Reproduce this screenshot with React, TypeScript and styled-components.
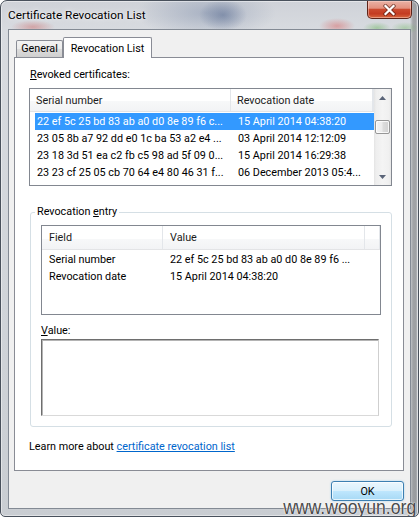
import React from 'react';
import styled, { createGlobalStyle } from 'styled-components';

const Global = createGlobalStyle`
  html, body { margin: 0; padding: 0; background: #ffffff; }
  body {
    font-family: Roboto, "Noto Sans", Arial, sans-serif;
    font-size: 10.8px;
    color: #000000;
  }
  * { box-sizing: border-box; }
`;

const Window = styled.div`
  position: relative;
  width: 419px;
  height: 517px;
  border: 1px solid #49515c;
  border-radius: 7px 7px 5px 5px;
  overflow: hidden;
  display: flex;
  flex-direction: column;
  box-shadow: inset 0 0 0 1px rgba(255, 255, 255, 0.45);
  background:
    radial-gradient(ellipse 22px 7px at 32px 26px, rgba(205, 120, 120, 0.55), transparent),
    radial-gradient(ellipse 24px 16px at 222px 14px, rgba(80, 100, 140, 0.5), transparent),
    radial-gradient(ellipse 70px 26px at 205px 12px, rgba(130, 145, 172, 0.5), transparent),
    radial-gradient(ellipse 18px 8px at 336px 25px, rgba(215, 120, 120, 0.6), transparent),
    radial-gradient(ellipse 14px 6px at 376px 27px, rgba(120, 185, 110, 0.55), transparent),
    radial-gradient(ellipse 14px 6px at 404px 27px, rgba(120, 185, 110, 0.45), transparent),
    linear-gradient(to right, transparent 409px, rgba(70, 70, 70, 0.35) 412px, rgba(40, 40, 40, 0.3) 415px, transparent 417px),
    linear-gradient(#cfd2d8, #d8dbe0 30px, #d0d4d9 300px, #c9cdd2);
`;

const TitleBar = styled.div`
  height: 28px;
  flex: none;
  display: flex;
  align-items: flex-start;
`;

const Title = styled.div`
  padding-left: 7px;
  line-height: 28px;
  font-size: 11.8px;
  color: #000;
  text-shadow: 0 0 6px rgba(255, 255, 255, 0.9), 0 0 2px rgba(255, 255, 255, 0.8);
`;

const CloseButton = styled.div`
  margin-left: auto;
  margin-right: 6px;
  width: 45px;
  height: 18px;
  border: 1px solid #5e2419;
  border-top: none;
  border-radius: 0 0 5px 5px;
  display: flex;
  align-items: center;
  justify-content: center;
  box-shadow: inset 0 0 0 1px rgba(255, 220, 210, 0.45);
  background: linear-gradient(#e9b2a5 0%, #e3917f 42%, #cb4a2f 50%, #c43b21 75%, #d8683f 100%);
`;

const Client = styled.div`
  margin: 0 7px;
  height: 480px;
  flex: none;
  border: 1px solid #838a94;
  background: #f0f0f0;
  display: flex;
  flex-direction: column;
`;

const TabStrip = styled.div`
  height: 27px;
  flex: none;
  display: flex;
  align-items: flex-end;
  padding-left: 7px;
`;

const Tab = styled.div<{ $active?: boolean }>`
  position: relative;
  z-index: ${p => (p.$active ? 1 : 0)};
  width: ${p => (p.$active ? 89 : 47)}px;
  height: ${p => (p.$active ? 21 : 17)}px;
  margin-bottom: ${p => (p.$active ? -1 : 0)}px;
  border: 1px solid #898c95;
  border-bottom: none;
  border-radius: 2px 2px 0 0;
  display: flex;
  align-items: center;
  justify-content: center;
  padding-bottom: ${p => (p.$active ? 0 : 1)}px;
  background: ${p =>
    p.$active
      ? '#ffffff'
      : 'linear-gradient(#f3f3f3 0%, #ebebeb 50%, #dddddd 51%, #cfcfcf 100%)'};
`;

const Panel = styled.div`
  margin-left: 5px;
  width: 390px;
  height: 414px;
  flex: none;
  border: 1px solid #898c95;
  background: #ffffff;
  display: flex;
  flex-direction: column;
`;

const Label = styled.div<{ $top: number; $left: number; $lh?: number }>`
  margin-top: ${p => p.$top}px;
  margin-left: ${p => p.$left}px;
  line-height: ${p => p.$lh ?? 14}px;
  white-space: nowrap;
`;

const ListView = styled.div<{ $w: number; $h: number; $top: number; $left: number }>`
  margin-top: ${p => p.$top}px;
  margin-left: ${p => p.$left}px;
  width: ${p => p.$w}px;
  height: ${p => p.$h}px;
  flex: none;
  border: 1px solid #828790;
  background: #ffffff;
  display: flex;
  overflow: hidden;
`;

const ListBody = styled.div`
  flex: 1;
  min-width: 0;
  display: flex;
  flex-direction: column;
`;

const Header = styled.div<{ $h: number }>`
  height: ${p => p.$h}px;
  flex: none;
  display: flex;
  border-bottom: 1px solid #e3e4e6;
  background: linear-gradient(#ffffff 0%, #ffffff 55%, #f7f8f9 56%, #f2f3f5 100%);
`;

const HeaderCell = styled.div<{ $w?: number; $pad: number }>`
  ${p => (p.$w ? `width: ${p.$w}px; flex: none;` : 'flex: 1;')}
  padding-left: ${p => p.$pad}px;
  border-right: 1px solid #e3e6ea;
  display: flex;
  align-items: center;
  white-space: nowrap;
  overflow: hidden;
  color: #1b1b1b;
`;

const Rows = styled.div<{ $inset: number }>`
  margin-top: 1px;
  padding-left: ${p => p.$inset}px;
  display: flex;
  flex-direction: column;
`;

const Row = styled.div<{ $selected?: boolean }>`
  height: 17px;
  flex: none;
  display: flex;
  align-items: center;
  background: ${p => (p.$selected ? '#3399ff' : 'transparent')};
  color: ${p => (p.$selected ? '#ffffff' : '#000000')};
`;

const Cell = styled.div<{ $w?: number; $pad: number }>`
  ${p => (p.$w ? `width: ${p.$w}px; flex: none;` : 'flex: 1;')}
  padding-left: ${p => p.$pad}px;
  white-space: nowrap;
  overflow: hidden;
`;

const ScrollBar = styled.div`
  width: 17px;
  flex: none;
  display: flex;
  flex-direction: column;
  background: linear-gradient(to right, #e4e4e4 0%, #eeeeee 12%, #f4f4f4 50%, #f0f0f0 88%, #e6e6e6 100%);
`;

const ScrollArrow = styled.div`
  height: 17px;
  flex: none;
  display: flex;
  align-items: center;
  justify-content: center;
`;

const Track = styled.div`
  flex: 1;
  padding: 14px 1px 0 1px;
`;

const Thumb = styled.div`
  height: 14px;
  border: 1px solid #979797;
  border-radius: 2px;
  box-shadow: inset 0 0 0 1px rgba(255, 255, 255, 0.8);
  background: linear-gradient(to right, #f4f4f4 0%, #ececec 45%, #dcdcdc 55%, #d2d2d2 100%);
`;

const GroupBox = styled.fieldset`
  margin: 19px 0 0 15px;
  width: 362px;
  padding: 6px 10px 10px 10px;
  border: 1px solid #d5dfe5;
  border-radius: 3px;
  min-width: 0;
`;

const Legend = styled.legend`
  margin-left: -6px;
  padding: 0 2px;
  line-height: 14px;
`;

const TextBox = styled.div`
  margin-top: 1px;
  width: 338px;
  height: 77px;
  border: 1px solid;
  border-color: #6e6e6e #cfcfcf #d9d9d9 #6e6e6e;
  box-shadow: inset 1px 1px 0 #b4b4b4;
  background: #ffffff;
`;

const Link = styled.a`
  color: #0066cc;
  text-decoration: underline;
  cursor: pointer;
`;

const Footer = styled.div`
  flex: 1;
  display: flex;
  justify-content: flex-end;
  align-items: flex-start;
  padding: 10px 6px 0 0;
`;

const OkButton = styled.button`
  width: 73px;
  height: 20px;
  padding: 0;
  font: inherit;
  color: #000;
  border: 1px solid #3c7fb1;
  border-radius: 3px;
  box-shadow: inset 0 0 0 1px rgba(255, 255, 255, 0.7), 0 0 2px rgba(110, 190, 240, 0.6);
  background: linear-gradient(#eaf6fd 0%, #d9f0fc 48%, #bee6fd 52%, #a7d9f5 100%);
`;

const Watermark = styled.div`
  position: absolute;
  right: 2px;
  bottom: 3px;
  height: 11px;
  line-height: 11px;
  font-family: "Liberation Sans", Arial, sans-serif;
  font-size: 20px;
  color: #4a4a4a;
  transform: scaleX(0.88);
  transform-origin: right center;
  text-shadow: 0 0 2px #ffffff, 0 0 1px #ffffff;
  white-space: nowrap;
  pointer-events: none;
`;

const Arrow = ({ up }: { up?: boolean }) => (
  <svg width="7" height="4" viewBox="0 0 7 4">
    <path d={up ? 'M0 4 L3.5 0 L7 4 Z' : 'M0 0 L3.5 4 L7 0 Z'} fill="#5a6478" />
  </svg>
);

const CloseX = () => (
  <svg width="13" height="12" viewBox="0 0 13 12">
    <path d="M2.5 2 L10.5 10 M10.5 2 L2.5 10" stroke="#4a1a10" strokeWidth="4" strokeLinecap="square" opacity="0.6" />
    <path d="M2.5 2 L10.5 10 M10.5 2 L2.5 10" stroke="#ffffff" strokeWidth="2.2" strokeLinecap="square" />
  </svg>
);

const revoked = [
  ['22 ef 5c 25 bd 83 ab a0 d0 8e 89 f6 c...', '15 April 2014 04:38:20'],
  ['23 05 8b a7 92 dd e0 1c ba 53 a2 e4 ...', '03 April 2014 12:12:09'],
  ['23 18 3d 51 ea c2 fb c5 98 ad 5f 09 0...', '15 April 2014 16:29:38'],
  ['23 23 cf 25 05 cb 70 64 e4 80 46 31 f...', '06 December 2013 05:4...'],
];

const entry = [
  ['Serial number', '22 ef 5c 25 bd 83 ab a0 d0 8e 89 f6 ...'],
  ['Revocation date', '15 April 2014 04:38:20'],
];

export default function App() {
  return (
    <>
      <Global />
      <Window>
        <TitleBar>
          <Title>Certificate Revocation List</Title>
          <CloseButton>
            <CloseX />
          </CloseButton>
        </TitleBar>
        <Client>
          <TabStrip>
            <Tab>General</Tab>
            <Tab $active>Revocation List</Tab>
          </TabStrip>
          <Panel>
            <Label $top={9} $left={15} $lh={16}>
              <u>R</u>evoked certificates:
            </Label>
            <ListView $w={363} $h={98} $top={5} $left={14}>
              <ListBody>
                <Header $h={23}>
                  <HeaderCell $w={201} $pad={6}>Serial number</HeaderCell>
                  <HeaderCell $w={142} $pad={6}>Revocation date</HeaderCell>
                  <HeaderCell $pad={0} />
                </Header>
                <Rows $inset={5}>
                  {revoked.map(([s, d], i) => (
                    <Row key={i} $selected={i === 0}>
                      <Cell $w={196} $pad={2}>{s}</Cell>
                      <Cell $pad={7}>{d}</Cell>
                    </Row>
                  ))}
                </Rows>
              </ListBody>
              <ScrollBar>
                <ScrollArrow>
                  <Arrow up />
                </ScrollArrow>
                <Track>
                  <Thumb />
                </Track>
                <ScrollArrow>
                  <Arrow />
                </ScrollArrow>
              </ScrollBar>
            </ListView>
            <GroupBox>
              <Legend>
                Revocation <u>e</u>ntry
              </Legend>
              <ListView $w={340} $h={90} $top={0} $left={0}>
                <ListBody>
                  <Header $h={24}>
                    <HeaderCell $w={121} $pad={7}>Field</HeaderCell>
                    <HeaderCell $w={202} $pad={7}>Value</HeaderCell>
                    <HeaderCell $pad={0} />
                  </Header>
                  <Rows $inset={0}>
                    {entry.map(([f, v], i) => (
                      <Row key={i}>
                        <Cell $w={121} $pad={7}>{f}</Cell>
                        <Cell $pad={7}>{v}</Cell>
                      </Row>
                    ))}
                  </Rows>
                </ListBody>
              </ListView>
              <Label $top={9} $left={0}>
                <u>V</u>alue:
              </Label>
              <TextBox />
            </GroupBox>
            <Label $top={13} $left={14}>
              Learn more about <Link>certificate revocation list</Link>
            </Label>
          </Panel>
          <Footer>
            <OkButton>OK</OkButton>
          </Footer>
        </Client>
        <Watermark>www.wooyun.org</Watermark>
      </Window>
    </>
  );
}
